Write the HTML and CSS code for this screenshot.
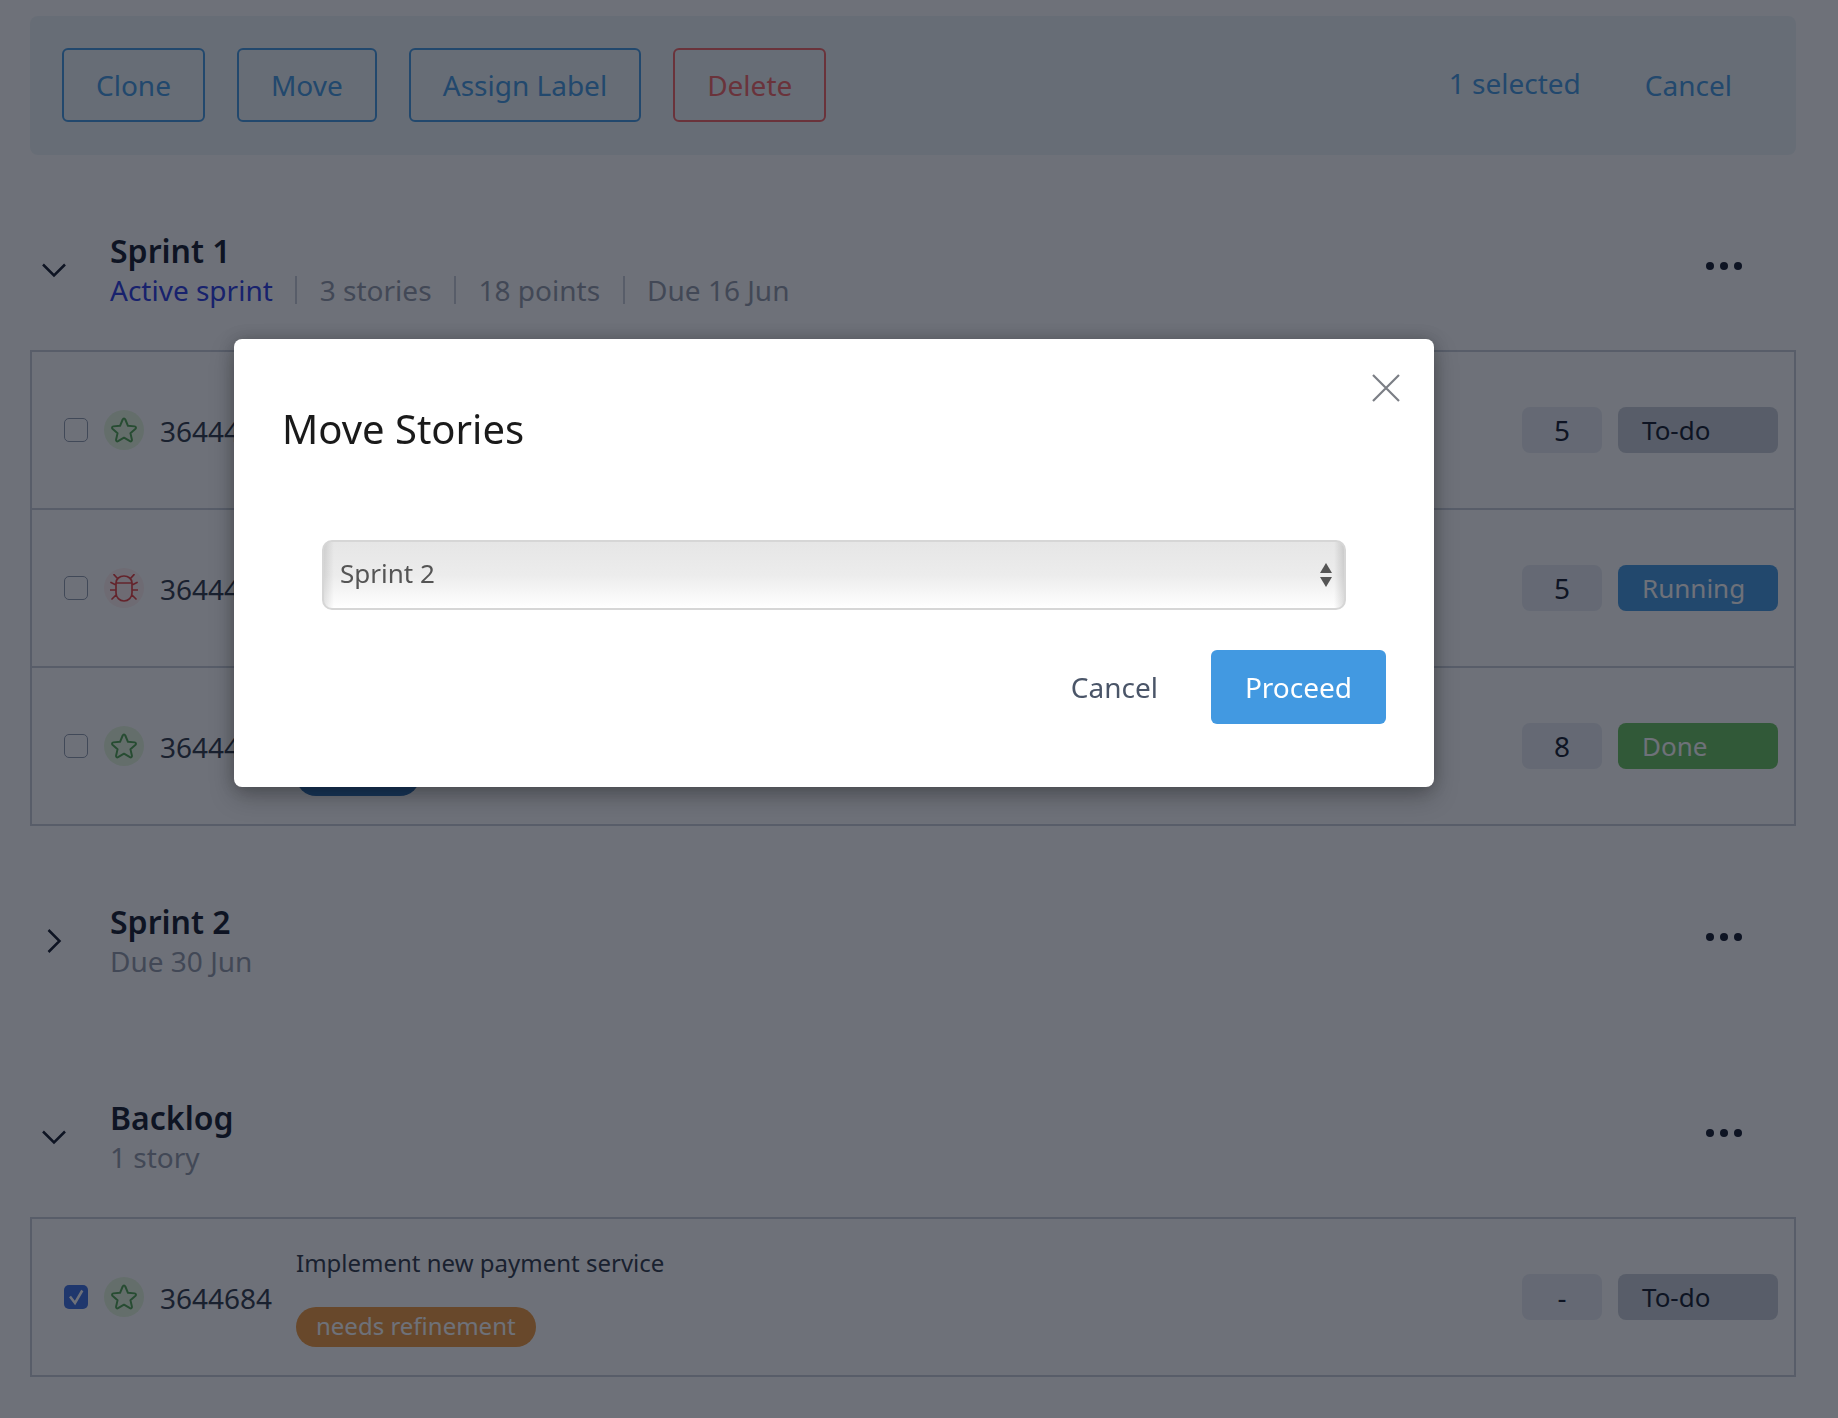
FILE: index.html
```html
<!DOCTYPE html>
<html lang="en">
<head>
  <meta charset="UTF-8">
  <meta name="viewport" content="width=device-width, initial-scale=1.0">
  <title>Backlog</title>
  <link rel="stylesheet" href="styles.css">
</head>
<body>
  <div class="page">
    <div class="toolbar">
      <button class="btn">Clone</button>
      <button class="btn">Move</button>
      <button class="btn">Assign Label</button>
      <button class="btn btn-danger">Delete</button>
      <span class="selected-count">1 selected</span>
      <button class="btn btn-plain">Cancel</button>
    </div>

    <section class="sprint">
      <div class="sprint-head">
        <svg class="chevron" width="24" height="24" viewBox="0 0 24 24"><path d="M1 6.500 12 17.500 23 6.500"/></svg>
        <div class="sprint-info">
          <div class="sprint-name">Sprint 1</div>
          <div class="sprint-meta">
            <span class="meta-item meta-active">Active sprint</span>
            <span class="meta-item">3 stories</span>
            <span class="meta-item">18 points</span>
            <span class="meta-item">Due 16 Jun</span>
          </div>
        </div>
        <div class="dots"><i></i><i></i><i></i></div>
      </div>
      <div class="stories">
        <div class="story">
          <input type="checkbox" class="check">
          <span class="type type-story"><svg width="28" height="28" viewBox="0 0 24 24"><use href="#star"/></svg></span>
          <span class="story-id">3644481</span>
          <div class="story-main"></div>
          <span class="points">5</span>
          <span class="status status-todo">To-do</span>
        </div>
        <div class="story">
          <input type="checkbox" class="check">
          <span class="type type-bug"><svg width="28" height="28" viewBox="0 0 28 28"><use href="#bug"/></svg></span>
          <span class="story-id">3644482</span>
          <div class="story-main"></div>
          <span class="points">5</span>
          <span class="status status-running">Running</span>
        </div>
        <div class="story">
          <input type="checkbox" class="check">
          <span class="type type-story"><svg width="28" height="28" viewBox="0 0 24 24"><use href="#star"/></svg></span>
          <span class="story-id">3644483</span>
          <div class="story-main">
            <div class="story-title"></div>
            <span class="label label-blue"></span>
          </div>
          <span class="points">8</span>
          <span class="status status-done">Done</span>
        </div>
      </div>
    </section>

    <section class="sprint sprint-closed">
      <div class="sprint-head">
        <svg class="chevron" width="24" height="24" viewBox="0 0 24 24"><path d="M6.500 1 17.500 12 6.500 23"/></svg>
        <div class="sprint-info">
          <div class="sprint-name">Sprint 2</div>
          <div class="sprint-meta"><span class="meta-plain">Due 30 Jun</span></div>
        </div>
        <div class="dots"><i></i><i></i><i></i></div>
      </div>
    </section>

    <section class="sprint">
      <div class="sprint-head">
        <svg class="chevron" width="24" height="24" viewBox="0 0 24 24"><path d="M1 6.500 12 17.500 23 6.500"/></svg>
        <div class="sprint-info">
          <div class="sprint-name">Backlog</div>
          <div class="sprint-meta"><span class="meta-plain">1 story</span></div>
        </div>
        <div class="dots"><i></i><i></i><i></i></div>
      </div>
      <div class="stories">
        <div class="story">
          <input type="checkbox" class="check" checked>
          <span class="type type-story"><svg width="28" height="28" viewBox="0 0 24 24"><use href="#star"/></svg></span>
          <span class="story-id">3644684</span>
          <div class="story-main">
            <div class="story-title">Implement new payment service</div>
            <span class="label label-orange">needs refinement</span>
          </div>
          <span class="points">-</span>
          <span class="status status-todo">To-do</span>
        </div>
      </div>
    </section>
  </div>

  <div class="overlay">
    <div class="modal">
      <svg class="modal-close" width="30" height="30" viewBox="0 0 30 30"><path d="M2 2 28 28M28 2 2 28"/></svg>
      <h2 class="modal-title">Move Stories</h2>
      <div class="select-wrap">
        <select class="select"><option>Sprint 2</option></select>
      </div>
      <div class="modal-actions">
        <button class="modal-cancel">Cancel</button>
        <button class="modal-proceed">Proceed</button>
      </div>
    </div>
  </div>

  <svg class="icon-defs" width="0" height="0">
    <symbol id="star" viewBox="0 0 24 24">
      <path d="M12 2.200c.5 0 .9.300 1.100.800l2.300 5.400 5.800.500c1 .100 1.400 1.300.700 2l-4.400 3.800 1.300 5.700c.2 1-.8 1.700-1.700 1.200L12 18.600l-5.100 3c-.9.500-1.900-.2-1.700-1.200l1.300-5.700-4.400-3.800c-.7-.7-.3-1.900.7-2l5.800-.5L10.900 3c.2-.5.600-.8 1.100-.8z"/>
    </symbol>
    <symbol id="bug" viewBox="0 0 28 28">
      <path d="M6 9c0-4 3.500-7 8-7s8 3 8 7v10c0 4.500-3.500 8-8 8s-8-3.500-8-8zM6 9h16M7.500 4.500 4 .7M20.500 4.500 24 .7M6 11 1 8.500M22 11l5-2.500M6 16H.5M22 16h5.500M6 21 2 25M22 21l4 4"/>
    </symbol>
  </svg>
</body>
</html>
```

FILE: styles.css
```css
* {
  box-sizing: border-box;
}
body {
  margin: 0;
  background: #fff;
  font-family: "Noto Sans", sans-serif;
  color: #2d3748;
}
button {
  font-family: inherit;
}
.page {
  padding: 16px 42px 41px 30px;
}
.icon-defs {
  position: absolute;
}

/* toolbar */
.toolbar {
  display: flex;
  align-items: center;
  gap: 32px;
  height: 139px;
  padding: 0 30px 1px 32px;
  margin-bottom: 75px;
  background: #eef5f7;
  border-radius: 8px;
}
.btn {
  height: 74px;
  padding: 0 32px;
  font-size: 28px;
  color: #4299e1;
  background: none;
  border: 2px solid #4299e1;
  border-radius: 6px;
}
.btn-danger {
  color: #f56565;
  border-color: #f56565;
}
.btn-plain {
  border-color: transparent;
}
.selected-count {
  margin-left: auto;
  margin-bottom: 4px;
  margin-right: -2px;
  font-size: 28px;
  color: #4299e1;
}

/* sprints */
.sprint {
  padding-bottom: 75px;
}
.sprint-closed {
  padding-bottom: 76px;
}
.sprint:last-child {
  padding-bottom: 0;
}
.sprint-head {
  display: flex;
  align-items: center;
  height: 80px;
  margin-bottom: 40px;
  padding: 0 54px 0 12px;
}
.chevron {
  flex: none;
  fill: none;
  stroke: #0f172a;
  stroke-width: 2.500;
}
.sprint-info {
  flex: 1;
  margin-left: 44px;
}
.sprint-name {
  padding-top: 2px;
  font-size: 32px;
  font-weight: 600;
  line-height: 38px;
  color: #0f172a;
}
.sprint-meta {
  display: flex;
  align-items: center;
  height: 40px;
  font-size: 28px;
  color: #929aa8;
}
.meta-item {
  padding: 0 22.500px;
  line-height: 28px;
  border-left: 2px solid #c8ced8;
}
.meta-item:first-child {
  padding-left: 0;
  border-left: none;
}
.meta-active {
  color: #2a3ae0;
}
.dots {
  display: flex;
  gap: 6px;
  margin-bottom: 8px;
}
.dots i {
  width: 8px;
  height: 8px;
  border-radius: 50%;
  background: #0f172a;
}

/* stories */
.stories {
  border: 2px solid #c8ced8;
}
.story {
  display: flex;
  align-items: center;
  height: 156px;
  padding: 0 16px 0 32px;
}
.story + .story {
  box-sizing: content-box;
  border-top: 2px solid #c8ced8;
}
.check {
  flex: none;
  width: 24px;
  height: 24px;
  margin: 0 16px 0 0;
  appearance: none;
  background: #fff;
  border: 1.500px solid #8f9bad;
  border-radius: 5px;
}
.check:checked {
  border: none;
  background: #3b6fe0 url("data:image/svg+xml,%3Csvg xmlns='http://www.w3.org/2000/svg' viewBox='0 0 24 24'%3E%3Cpath d='M6 11.500 11 18 18.300 5.500' fill='none' stroke='white' stroke-width='2.500'/%3E%3C/svg%3E") center/contain no-repeat;
}
.type {
  display: flex;
  align-items: center;
  justify-content: center;
  flex: none;
  width: 40px;
  height: 40px;
  margin-right: 16px;
  border-radius: 50%;
}
.type svg {
  fill: none;
  stroke-width: 1.700;
  stroke-linecap: round;
  stroke-linejoin: round;
}
.type-story {
  background: #e6f8dc;
}
.type-story svg {
  stroke: #4fa34f;
}
.type-bug {
  background: #fff0f0;
}
.type-bug svg {
  stroke: #e53e3e;
}
.story-id {
  flex: none;
  width: 136px;
  padding-top: 1px;
  font-size: 28px;
  color: #2d3748;
}
.story-main {
  flex: 1;
  padding-bottom: 2px;
}
.story-title {
  min-height: 36px;
  margin-bottom: 26px;
  font-size: 24px;
  line-height: 36px;
}
.label {
  display: inline-block;
  height: 40px;
  padding: 0 20px;
  font-size: 24px;
  line-height: 38px;
  color: #fff;
  border-radius: 20px;
  vertical-align: top;
}
.label-blue {
  width: 124px;
  background: #2b6cb0;
}
.label-orange {
  background: #f0993c;
}
.points {
  flex: none;
  width: 80px;
  height: 46px;
  margin-right: 16px;
  font-size: 28px;
  line-height: 46px;
  text-align: center;
  color: #0f172a;
  background: #e8ecf2;
  border-radius: 8px;
}
.status {
  flex: none;
  width: 160px;
  height: 46px;
  padding-left: 24px;
  font-size: 26px;
  line-height: 46px;
  border-radius: 8px;
}
.status-todo {
  color: #0f172a;
  background: #c8ced6;
}
.status-running {
  color: #fff;
  background: #4299e1;
}
.status-done {
  color: #fff;
  background: #68c35c;
}

/* modal */
.overlay {
  position: fixed;
  top: 0;
  right: 0;
  bottom: 0;
  left: 0;
  background: rgba(13, 19, 32, 0.6);
}
.modal {
  position: absolute;
  top: 339px;
  left: 234px;
  width: 1200px;
  height: 448px;
  padding: 64px 48px 0;
  background: #fff;
  border-radius: 8px;
  box-shadow: 0 10px 24px rgba(0, 0, 0, 0.25), 0 0 16px rgba(0, 0, 0, 0.2);
}
.modal-close {
  position: absolute;
  top: 34px;
  right: 33px;
  fill: none;
  stroke: #7b7e85;
  stroke-width: 2.200;
}
.modal-title {
  margin: 0;
  font-size: 40px;
  font-weight: 400;
  line-height: 52px;
  color: #1a1a1a;
}
.select-wrap {
  position: relative;
  width: 1024px;
  margin: 85px 0 0 40px;
}
.select-wrap::before,
.select-wrap::after {
  content: "";
  position: absolute;
  right: 14px;
  width: 0;
  height: 0;
  border-left: 6px solid transparent;
  border-right: 6px solid transparent;
}
.select-wrap::before {
  top: 23px;
  border-bottom: 10px solid #555;
}
.select-wrap::after {
  top: 37px;
  border-top: 10px solid #555;
}
.select {
  display: block;
  width: 100%;
  height: 70px;
  padding: 0 16px 4px;
  font-family: inherit;
  font-size: 26px;
  color: #555;
  appearance: none;
  border: 2px solid #d6d6d6;
  border-radius: 10px;
  background:
    linear-gradient(to right, rgba(0, 0, 0, 0.1), rgba(0, 0, 0, 0) 10px),
    linear-gradient(to left, rgba(0, 0, 0, 0.12), rgba(0, 0, 0, 0) 10px),
    linear-gradient(#e6e6e6, #ececec 50%, #fff);
}
.modal-actions {
  display: flex;
  justify-content: flex-end;
  align-items: center;
  gap: 53px;
  margin-top: 40px;
}
.modal-cancel {
  padding: 0;
  font-size: 28px;
  color: #4a5568;
  background: none;
  border: none;
}
.modal-proceed {
  width: 175px;
  height: 74px;
  font-size: 28px;
  color: #fff;
  background: #4299e1;
  border: none;
  border-radius: 6px;
}
```
